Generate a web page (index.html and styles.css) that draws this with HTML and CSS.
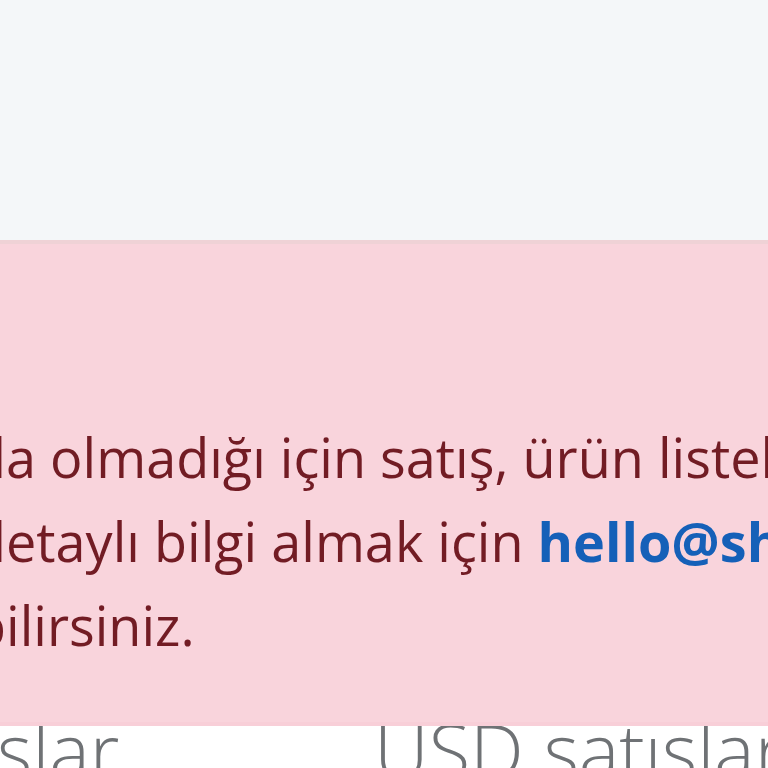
FILE: index.html
```html
<!DOCTYPE html>
<html lang="tr">
<head>
    <meta charset="UTF-8">
    <meta name="viewport" content="width=device-width, initial-scale=1.0">
    <title>Mağaza Paneli</title>
    <link rel="stylesheet" href="styles.css">
</head>
<body>
    <div class="topbar"></div>

    <!-- Account warning -->
    <div class="alert">
        <p>da olmadığı için satış, ürün listeleme ve ödeme alma işlemlerini yapamazsınız. Daha<br>
        detaylı bilgi almak için <a href="mailto:hello@shopier.com" class="alert-link">hello@shopier.com</a> adresine mail atarak bize ulaşa<br>
        bilirsiniz.</p>
    </div>

    <!-- Sales summary -->
    <div class="stats">
        <div class="stat">
            <h3>TL satışlar</h3>
        </div>
        <div class="stat">
            <h3>USD satışlar</h3>
        </div>
    </div>
</body>
</html>
```

FILE: styles.css
```css
html, body {
    overflow: hidden;
}

body {
    margin: 0;
    font-family: "Open Sans", "Noto Sans", sans-serif;
    background-color: #f4f7f9;
}

.topbar {
    height: 240px;
}

.alert {
    position: relative;
    z-index: 1;
    margin: 0 -300px 0 -200px;
    padding: 171px 0 55px 173px;
    background-color: #f9d4dc;
    border-top: 4px solid #efd2d6;
    border-bottom: 4px solid #f8cfd8;
    color: #721c24;
    font-size: 54px;
    line-height: 84px;
    white-space: nowrap;
}

.alert p {
    margin: 0;
}

.alert-link {
    color: #1560b8;
    font-weight: 700;
    text-decoration: none;
}

.stats {
    display: grid;
    grid-template-columns: 594px 594px;
    width: 1188px;
    margin: -22px 0 0 -220px;
    min-height: 200px;
    background: white;
}

.stat h3 {
    margin: 0;
    font-size: 76px;
    font-weight: 300;
    line-height: 1.2;
    color: #6f7275;
    white-space: nowrap;
}
```
